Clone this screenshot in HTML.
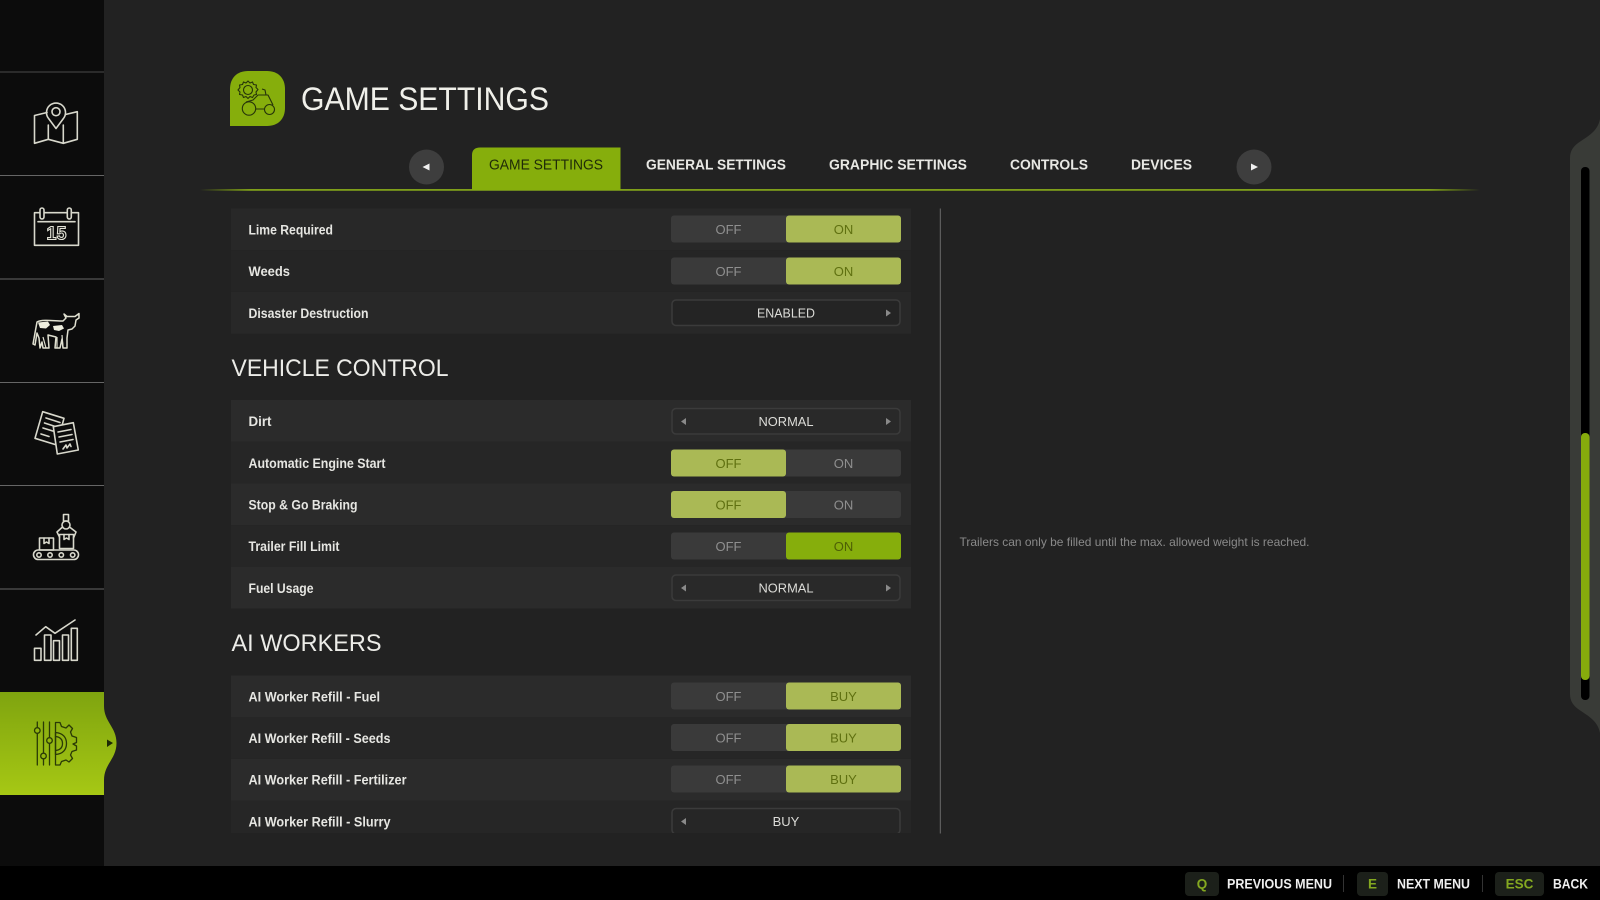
<!DOCTYPE html>
<html><head><meta charset="utf-8"><title>Game Settings</title>
<style>
html,body{margin:0;padding:0;background:#222;width:1600px;height:900px;overflow:hidden}
svg{display:block}
text{font-family:"Liberation Sans",sans-serif}
.lb{font-weight:700;font-size:13.5px;fill:#e6e6e2}
.hd{font-size:24px;fill:#ecece8}
.off{font-size:13px;fill:#8f8f8f}
.on{font-size:13px;fill:#5f7010}
.onb{font-size:13px;fill:#4d5f05}
.val{font-size:13px;fill:#dcdcd8}
.tab{font-weight:700;font-size:14.5px;fill:#e8e8e4}
.ft{font-weight:700;font-size:13.5px;fill:#efefef}
.key{font-weight:700;font-size:13.5px;fill:#84a820}
.ic{fill:none;stroke:#d8d8cc;stroke-width:1.6;stroke-linejoin:round;stroke-linecap:round}
.gi{fill:none;stroke:#2a3a06;stroke-width:1.3;stroke-linejoin:round;stroke-linecap:round}
.tg{fill:#3a3a3a}
.dim{fill:#aab955}
.st{fill:#242424;stroke:#3b3b3b;stroke-width:1.5}
.ar{fill:#8a8a8a}
</style></head><body>
<svg xmlns="http://www.w3.org/2000/svg" width="1600" height="900" viewBox="0 0 1600 900">
<defs>
<linearGradient id="ln" x1="0" x2="1" y1="0" y2="0"><stop offset="0" stop-color="#87ad0b" stop-opacity="0"/><stop offset=".04" stop-color="#7f9f1a"/><stop offset=".96" stop-color="#7f9f1a"/><stop offset="1" stop-color="#87ad0b" stop-opacity="0"/></linearGradient>
<linearGradient id="act" x1="0" x2="0" y1="0" y2="1"><stop offset="0" stop-color="#7fa40f"/><stop offset="1" stop-color="#a6c814"/></linearGradient>
<clipPath id="cl"><rect x="225" y="205" width="700" height="628"/></clipPath>
</defs>
<rect width="1600" height="900" fill="#222222"/>

<!-- sidebar -->
<rect width="104" height="866" fill="#0c0c0c"/>
<g fill="#4a4a4a">
<rect y="71.5" width="104" height="1"/>
<rect y="175" width="104" height="1" fill="#666"/>
<rect y="278.5" width="104" height="1" fill="#666"/>
<rect y="382" width="104" height="1" fill="#666"/>
<rect y="485" width="104" height="1" fill="#666"/>
<rect y="588.5" width="104" height="1" fill="#666"/>
</g>
<path d="M0 692H104V706C104 722 116.500 727 116.500 743C116.500 759 104 764 104 780V795H0Z" fill="url(#act)"/>
<path d="M107 739.500L113 743L107 747Z" fill="#1d2a05"/>

<!-- map -->
<g class="ic">
<path d="M47 112.500L34.500 115.500V143.300L48.300 139.300L63.300 143.300L77.300 139.300V111.700L65.500 114.500"/>
<path d="M48.300 125V139.300M63.300 125V143.300"/>
<path d="M56 128.500L48.600 118.500A9.500 9.500 0 1 1 63.400 118.500Z"/>
<circle cx="56" cy="111.700" r="4"/>
</g>
<!-- calendar -->
<g class="ic">
<rect x="34.500" y="212.700" width="44" height="32.600"/>
<rect x="40" y="208" width="4" height="11" rx="2" fill="#0c0c0c"/>
<rect x="67.300" y="208" width="4" height="11" rx="2" fill="#0c0c0c"/>
<path d="M38 221.700H75"/>
</g>
<text x="56.500" y="239.500" text-anchor="middle" font-size="18" font-weight="700" fill="#0c0c0c" stroke="#e4e4d8" stroke-width="1.100" textLength="20" lengthAdjust="spacingAndGlyphs">15</text>
<!-- cow -->
<g>
<path d="M37 322C42 319 55 321 63 321L66 318L64 314L67 316.500H75L79 313.500L79 318L76 320L75 326L72 329L68 330L67 338V348H63L62 339L60 348H55L56 337L48 335L49 348H43L42 342L40 348L39 338L37 333L35 345L33 344Z" fill="#0c0c0c" stroke="#e0e0d0" stroke-width="1.500" stroke-linejoin="round"/>
<path d="M38 322.500L48 321.500L50 325L46 328.500L40 328Z" fill="#eeeede"/>
<path d="M53 326L62 325L64 328.500L59 331L54 330Z" fill="#eeeede"/>
<path d="M43 337L46 348M57 337V348M62 335L63 347" stroke="#e0e0d0" stroke-width="1.200" fill="none"/>
</g>
<!-- docs -->
<g class="ic" stroke-width="1.500">
<path d="M42.700 411.700L64 418.300L56.700 445L35 438.300Z" fill="#0c0c0c"/>
<path d="M46 418L60 422.500M44.500 423L58.500 427.500M43 428L56 432M41 434L49 436.500"/>
<path d="M53.300 426.700L73.300 422.700L78.300 450L57.300 454Z" fill="#0c0c0c"/>
<path d="M58 432L71 429.500M59 437L72 434.500M60 442L73 439.500M63 449L66 445L67 448L70 444L71 446.500"/>
</g>
<!-- factory -->
<g class="ic">
<rect x="33.500" y="550" width="45" height="9.500" rx="4.700"/>
<circle cx="39" cy="555" r="2.200"/><circle cx="50" cy="555" r="2.200"/><circle cx="61.300" cy="555" r="2.200"/><circle cx="72.700" cy="555" r="2.200"/>
<rect x="39.500" y="538" width="14" height="12"/>
<path d="M44 538V543.500L46.500 542L49 543.500V538"/>
<path d="M59.500 534.500V548.500H73.500V534.500Z"/>
<path d="M64 534.500V539.500L66.500 538L69 539.500V534.500"/>
<circle cx="66" cy="525" r="4"/>
<path d="M63.500 514.500H68.500V521H63.500Z"/>
<path d="M62.500 527L57 532L59.500 537M69.500 527L76 532L73.500 538"/>
</g>
<!-- chart -->
<g class="ic" stroke-width="1.500">
<rect x="34.500" y="648.300" width="6.500" height="12"/>
<rect x="44.500" y="635" width="6.500" height="25.300"/>
<rect x="53.500" y="640.700" width="6" height="19.600"/>
<rect x="62.500" y="635" width="6" height="25.300"/>
<rect x="71.300" y="628.300" width="6" height="32"/>
<path d="M36 635L45.700 626.700L55 633.300L75 620"/>
</g>
<!-- settings gear -->
<g class="gi" stroke-width="1.300">
<path d="M37.300 722V765M43.500 722V765M49.500 722V765"/>
<circle cx="37.300" cy="730.500" r="2.800" fill="#92b60f"/>
<circle cx="49.500" cy="740.500" r="2.800" fill="#92b60f"/>
<circle cx="43.500" cy="756" r="2.800" fill="#92b60f"/>
<path d="M55.500 722.500H60L61.500 726.500L66 728L69 725L72.500 728.500L70.500 732L72 736L76.500 737.500V742.500L73 744L76.500 746V750L72 751.500L70.500 755L72.500 758.500L69 762L66 760L61.500 761.500L60 765H55.500Z"/>
<path d="M55.500 732.500C63 733 66.500 737.500 66.500 743.500C66.500 749.500 63 754 55.500 754.500Z"/>
<path d="M55.500 736.500C60 737 62.500 739.500 62.500 743.500C62.500 747.500 60 750 55.500 750.500"/>
</g>

<!-- title -->
<path d="M230 126V89C230 78 237 71 248 71H267C278 71 285 78 285 89V108C285 119 278 126 267 126Z" fill="#86ae0c"/>
<g fill="none" stroke="#26340a" stroke-width="1.100" stroke-linejoin="round">
<circle cx="248" cy="90" r="4.500"/>
<path d="M248 81L250 83L252.500 82L253.500 84.500L256.500 85L256 87.500L258 89.500L256 92L256.500 94.500L254 95L252.500 97.500L250 96.500L248 98.500L246 96.500L243.500 97.500L242.500 95L239.500 94.500L240 92L238 90L240 87.500L239.500 85L242.500 84.500L243.500 82L246 83Z"/>
<circle cx="249" cy="108.500" r="6.700"/>
<circle cx="269.500" cy="109.500" r="5"/>
<path d="M255.500 109H264.500M246 102L253 100L258 95H268L273 105"/>
<path d="M262 89L265 90L266 95"/>
</g>
<text x="301" y="110" font-size="32" fill="#f0f0ea" textLength="248" lengthAdjust="spacingAndGlyphs">GAME SETTINGS</text>

<!-- tabs -->
<rect x="200" y="189" width="1280" height="1.800" fill="url(#ln)"/>
<path d="M472 190V155C472 150 475 147.500 480 147.500H620.500V190Z" fill="#86ae0c"/>
<circle cx="426.500" cy="167" r="17.500" fill="#3e3e3e"/>
<path d="M422.500 167L429.500 163.500V170.500Z" fill="#f0f0f0"/>
<circle cx="1254" cy="167" r="17.500" fill="#3e3e3e"/>
<path d="M1258 167L1251 163.500V170.500Z" fill="#f0f0f0"/>
<text class="tab" x="489" y="169.500" style="fill:#1f2a08;font-weight:400" textLength="114" lengthAdjust="spacingAndGlyphs">GAME SETTINGS</text>
<text class="tab" x="646" y="169.500" textLength="140" lengthAdjust="spacingAndGlyphs">GENERAL SETTINGS</text>
<text class="tab" x="829" y="169.500" textLength="138" lengthAdjust="spacingAndGlyphs">GRAPHIC SETTINGS</text>
<text class="tab" x="1010" y="169.500" textLength="78" lengthAdjust="spacingAndGlyphs">CONTROLS</text>
<text class="tab" x="1131" y="169.500" textLength="61" lengthAdjust="spacingAndGlyphs">DEVICES</text>

<!-- list -->
<g clip-path="url(#cl)">
<!-- rows -->
<rect x="231" y="208.500" width="680" height="41.700" fill="#282828"/>
<rect x="231" y="250.200" width="680" height="41.700" fill="#252525"/>
<rect x="231" y="291.900" width="680" height="41.700" fill="#282828"/>
<rect x="231" y="400" width="680" height="41.700" fill="#2b2b2b"/>
<rect x="231" y="441.700" width="680" height="41.700" fill="#262626"/>
<rect x="231" y="483.400" width="680" height="41.700" fill="#2b2b2b"/>
<rect x="231" y="525.100" width="680" height="41.700" fill="#262626"/>
<rect x="231" y="566.800" width="680" height="41.700" fill="#2b2b2b"/>
<rect x="231" y="675.500" width="680" height="41.700" fill="#2b2b2b"/>
<rect x="231" y="717.200" width="680" height="41.700" fill="#262626"/>
<rect x="231" y="758.900" width="680" height="41.700" fill="#2b2b2b"/>
<rect x="231" y="800.600" width="680" height="41.700" fill="#262626"/>

<!-- labels -->
<text class="lb" x="248.500" y="234.500" textLength="84.500" lengthAdjust="spacingAndGlyphs">Lime Required</text>
<text class="lb" x="248.500" y="276" textLength="41.500" lengthAdjust="spacingAndGlyphs">Weeds</text>
<text class="lb" x="248.500" y="318" textLength="120" lengthAdjust="spacingAndGlyphs">Disaster Destruction</text>
<text class="lb" x="248.500" y="426" textLength="23" lengthAdjust="spacingAndGlyphs">Dirt</text>
<text class="lb" x="248.500" y="468" textLength="137" lengthAdjust="spacingAndGlyphs">Automatic Engine Start</text>
<text class="lb" x="248.500" y="509.500" textLength="109" lengthAdjust="spacingAndGlyphs">Stop &amp; Go Braking</text>
<text class="lb" x="248.500" y="551" textLength="91" lengthAdjust="spacingAndGlyphs">Trailer Fill Limit</text>
<text class="lb" x="248.500" y="593" textLength="65" lengthAdjust="spacingAndGlyphs">Fuel Usage</text>
<text class="lb" x="248.500" y="701.500" textLength="131.500" lengthAdjust="spacingAndGlyphs">AI Worker Refill - Fuel</text>
<text class="lb" x="248.500" y="743" textLength="142" lengthAdjust="spacingAndGlyphs">AI Worker Refill - Seeds</text>
<text class="lb" x="248.500" y="784.500" textLength="158" lengthAdjust="spacingAndGlyphs">AI Worker Refill - Fertilizer</text>
<text class="lb" x="248.500" y="826.500" textLength="142" lengthAdjust="spacingAndGlyphs">AI Worker Refill - Slurry</text>

<!-- toggles -->
<rect class="tg" x="671" y="215.500" width="230" height="27" rx="3"/>
<rect class="dim" x="786" y="215.500" width="115" height="27" rx="3"/>
<text class="off" x="728.500" y="234" text-anchor="middle">OFF</text><text class="on" x="843.500" y="234" text-anchor="middle">ON</text>

<rect class="tg" x="671" y="257.500" width="230" height="27" rx="3"/>
<rect class="dim" x="786" y="257.500" width="115" height="27" rx="3"/>
<text class="off" x="728.500" y="276" text-anchor="middle">OFF</text><text class="on" x="843.500" y="276" text-anchor="middle">ON</text>

<rect class="st" x="672" y="300" width="228" height="25.500" rx="4"/>
<text class="val" x="786" y="317.500" text-anchor="middle" textLength="58" lengthAdjust="spacingAndGlyphs">ENABLED</text>
<path class="ar" d="M886 309.500L891 313L886 316.500Z"/>

<rect class="st" x="672" y="408.500" width="228" height="25.500" rx="4" style="fill:#292929"/>
<text class="val" x="786" y="426" text-anchor="middle" textLength="55" lengthAdjust="spacingAndGlyphs">NORMAL</text>
<path class="ar" d="M686 418L681 421.500L686 425Z"/><path class="ar" d="M886 418L891 421.500L886 425Z"/>

<rect class="tg" x="671" y="449.500" width="230" height="27" rx="3"/>
<rect class="dim" x="671" y="449.500" width="115" height="27" rx="3"/>
<text class="on" x="728.500" y="468" text-anchor="middle">OFF</text><text class="off" x="843.500" y="468" text-anchor="middle">ON</text>

<rect class="tg" x="671" y="491" width="230" height="27" rx="3"/>
<rect class="dim" x="671" y="491" width="115" height="27" rx="3"/>
<text class="on" x="728.500" y="509.500" text-anchor="middle">OFF</text><text class="off" x="843.500" y="509.500" text-anchor="middle">ON</text>

<rect class="tg" x="671" y="532.500" width="230" height="27" rx="3"/>
<rect x="786" y="532.500" width="115" height="27" rx="3" fill="#86ae0c"/>
<text class="off" x="728.500" y="551" text-anchor="middle">OFF</text><text class="onb" x="843.500" y="551" text-anchor="middle">ON</text>

<rect class="st" x="672" y="575" width="228" height="25.500" rx="4" style="fill:#292929"/>
<text class="val" x="786" y="592.500" text-anchor="middle" textLength="55" lengthAdjust="spacingAndGlyphs">NORMAL</text>
<path class="ar" d="M686 584.500L681 588L686 591.500Z"/><path class="ar" d="M886 584.500L891 588L886 591.500Z"/>

<rect class="tg" x="671" y="682.500" width="230" height="27" rx="3"/>
<rect class="dim" x="786" y="682.500" width="115" height="27" rx="3"/>
<text class="off" x="728.500" y="701" text-anchor="middle">OFF</text><text class="on" x="843.500" y="701" text-anchor="middle">BUY</text>

<rect class="tg" x="671" y="724" width="230" height="27" rx="3"/>
<rect class="dim" x="786" y="724" width="115" height="27" rx="3"/>
<text class="off" x="728.500" y="742.500" text-anchor="middle">OFF</text><text class="on" x="843.500" y="742.500" text-anchor="middle">BUY</text>

<rect class="tg" x="671" y="765.500" width="230" height="27" rx="3"/>
<rect class="dim" x="786" y="765.500" width="115" height="27" rx="3"/>
<text class="off" x="728.500" y="784" text-anchor="middle">OFF</text><text class="on" x="843.500" y="784" text-anchor="middle">BUY</text>

<rect class="st" x="672" y="808.500" width="228" height="25.500" rx="4" style="fill:#262626"/>
<text class="val" x="786" y="826" text-anchor="middle">BUY</text>
<path class="ar" d="M686 818L681 821.500L686 825Z"/>
</g>
<text class="hd" x="231.500" y="376" textLength="217" lengthAdjust="spacingAndGlyphs">VEHICLE CONTROL</text>
<text class="hd" x="231.500" y="651" textLength="217" style="display:none"></text>
<text class="hd" x="231.500" y="651" textLength="150" lengthAdjust="spacingAndGlyphs">AI WORKERS</text>

<!-- divider + help -->
<rect x="939.800" y="208.500" width="1" height="625" fill="#6a6a6a"/>
<text x="959.500" y="546" font-size="12" fill="#8a8a8a" textLength="350" lengthAdjust="spacingAndGlyphs">Trailers can only be filled until the max. allowed weight is reached.</text>

<!-- scrollbar -->
<path d="M1600 119C1598 130 1590 135 1581 141C1573 146 1570 151 1570 158V694C1570 701 1573 706 1581 711C1590 717 1598 722 1600 733Z" fill="#393b37"/>
<rect x="1581" y="167" width="8.500" height="533" rx="4" fill="#000"/>
<rect x="1581" y="433" width="8.500" height="247" rx="4" fill="#86ab0c"/>

<!-- footer -->
<rect y="866" width="1600" height="34" fill="#000"/>
<rect x="1185" y="872" width="34" height="24" rx="4" fill="#1c201a"/>
<text class="key" x="1202" y="888.500" text-anchor="middle">Q</text>
<text class="ft" x="1227" y="888.500" textLength="105" lengthAdjust="spacingAndGlyphs">PREVIOUS MENU</text>
<rect x="1343" y="875" width="1" height="17" fill="#333"/>
<rect x="1357" y="872" width="31" height="24" rx="4" fill="#1c201a"/>
<text class="key" x="1372.500" y="888.500" text-anchor="middle">E</text>
<text class="ft" x="1397" y="888.500" textLength="73" lengthAdjust="spacingAndGlyphs">NEXT MENU</text>
<rect x="1482" y="875" width="1" height="17" fill="#333"/>
<rect x="1495" y="872" width="49" height="24" rx="4" fill="#1c201a"/>
<text class="key" x="1519.500" y="888.500" text-anchor="middle">ESC</text>
<text class="ft" x="1553" y="888.500" textLength="35" lengthAdjust="spacingAndGlyphs">BACK</text>
</svg>
</body></html>
